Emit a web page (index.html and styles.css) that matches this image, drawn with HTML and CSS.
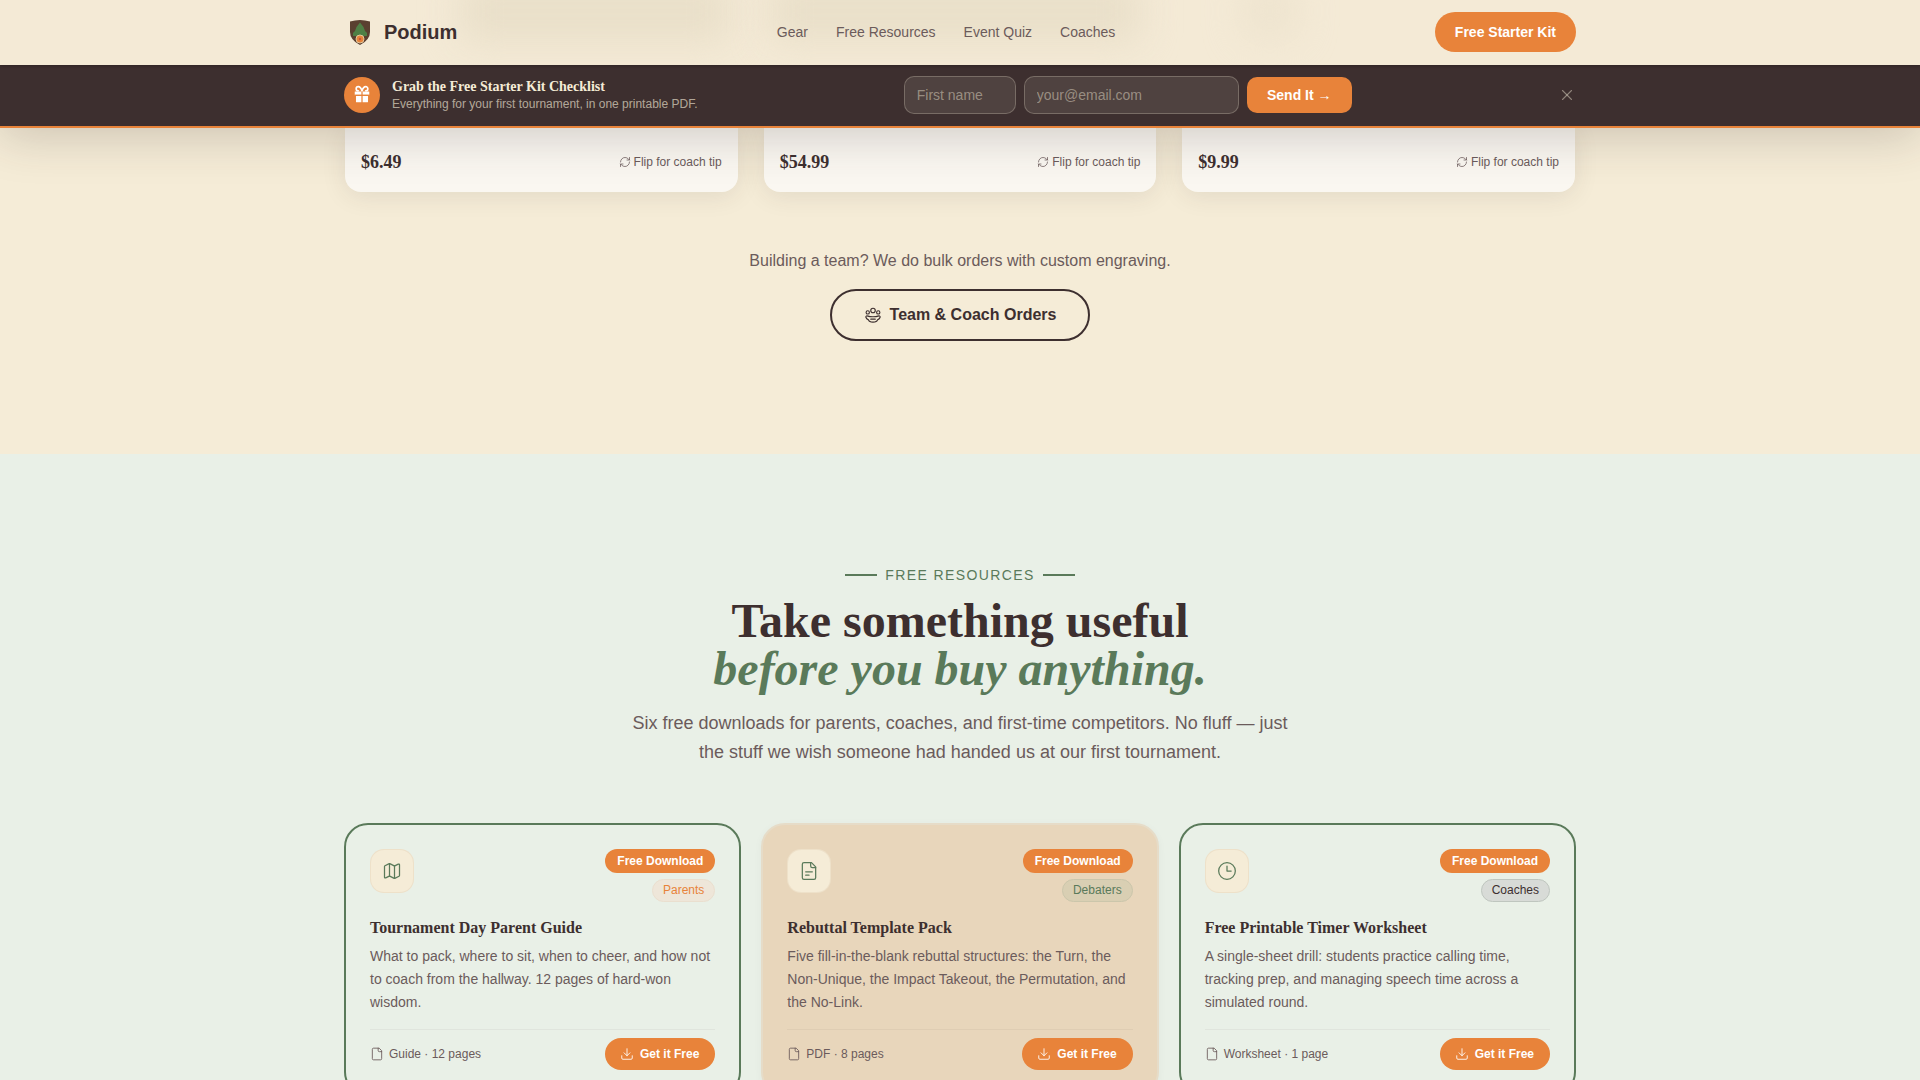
FILE: index.html
```html
<!DOCTYPE html>
<html>
<head>
  <title>Podium</title>
  <link rel="stylesheet" href="styles.css">
</head>
<body>
  <div id="nav">
    <!-- gear photos scrolling behind the frosted nav -->
    <span class="nav-blur nav-blur-a"></span>
    <span class="nav-blur nav-blur-b"></span>
    <span class="nav-blur nav-blur-c"></span>
    <div class="nav-inner">
      <a class="brand">
        <svg class="brand-logo" viewBox="0 0 24 28">
          <path d="M2 3.500 Q12 .5 22 3.500 V14 Q22 22 12 27 Q2 22 2 14 Z" fill="#5a4030"/>
          <path d="M12 4.500 L15.500 9 L17 13 L19 15 L19 18 H5 L5 15 L7 13 L8.500 9 Z" fill="#4f7f45"/>
          <circle cx="12" cy="21" r="4" fill="#e8833a" stroke="#e3c79c" stroke-width="1"/>
          <circle cx="12" cy="21" r="1.200" fill="#c8553a"/>
        </svg>
        <span class="brand-name">Podium</span>
      </a>
      <div class="nav-links">
        <a>Gear</a>
        <a>Free Resources</a>
        <a>Event Quiz</a>
        <a>Coaches</a>
      </div>
      <a class="nav-cta">Free Starter Kit</a>
    </div>
  </div>

  <div id="banner">
    <div class="banner-inner">
      <div class="banner-left">
        <div class="banner-icon">
          <svg viewBox="0 0 24 24" fill="#fff" stroke="#e8833a" stroke-width="1.500" stroke-linecap="round" stroke-linejoin="round">
            <rect x="2.500" y="7" width="19" height="5.500" rx="1"/>
            <path d="M4 12.500h16v7.500a1.500 1.500 0 0 1-1.500 1.500h-13A1.500 1.500 0 0 1 4 20z"/>
            <path d="M12 7v14.500"/>
            <path d="M7.500 7a2.500 2.500 0 0 1 0-5C10.500 2 12 7 12 7s1.500-5 4.500-5a2.500 2.500 0 0 1 0 5" fill="none" stroke="#fff" stroke-width="2"/>
          </svg>
        </div>
        <div>
          <div class="banner-title">Grab the Free Starter Kit Checklist</div>
          <div class="banner-sub">Everything for your first tournament, in one printable PDF.</div>
        </div>
      </div>
      <form class="banner-form">
        <input type="text" class="input-name" placeholder="First name">
        <input type="text" class="input-email" placeholder="your@email.com">
        <button type="button" class="send-btn">Send It →</button>
      </form>
      <button type="button" class="banner-close">
        <svg viewBox="0 0 24 24" fill="none" stroke="currentColor" stroke-width="1.500" stroke-linecap="round"><path d="M18 6 6 18"/><path d="m6 6 12 12"/></svg>
      </button>
    </div>
  </div>

  <div id="gear">
    <div class="container">
      <div class="gear-grid">
        <div class="gear-card">
          <span class="price">$6.49</span>
          <span class="flip"><svg class="icon-flip" viewBox="0 0 24 24"><path d="M3 12a9 9 0 0 1 9-9 9.750 9.750 0 0 1 6.740 2.740L21 8"/><path d="M21 3v5h-5"/><path d="M21 12a9 9 0 0 1-9 9 9.750 9.750 0 0 1-6.740-2.740L3 16"/><path d="M8 16H3v5"/></svg>Flip for coach tip</span>
        </div>
        <div class="gear-card">
          <span class="price">$54.99</span>
          <span class="flip"><svg class="icon-flip" viewBox="0 0 24 24"><path d="M3 12a9 9 0 0 1 9-9 9.750 9.750 0 0 1 6.740 2.740L21 8"/><path d="M21 3v5h-5"/><path d="M21 12a9 9 0 0 1-9 9 9.750 9.750 0 0 1-6.740-2.740L3 16"/><path d="M8 16H3v5"/></svg>Flip for coach tip</span>
        </div>
        <div class="gear-card">
          <span class="price">$9.99</span>
          <span class="flip"><svg class="icon-flip" viewBox="0 0 24 24"><path d="M3 12a9 9 0 0 1 9-9 9.750 9.750 0 0 1 6.740 2.740L21 8"/><path d="M21 3v5h-5"/><path d="M21 12a9 9 0 0 1-9 9 9.750 9.750 0 0 1-6.740-2.740L3 16"/><path d="M8 16H3v5"/></svg>Flip for coach tip</span>
        </div>
      </div>
      <div class="team">
        <p class="team-text">Building a team? We do bulk orders with custom engraving.</p>
        <a class="team-btn">
          <svg viewBox="0 0 24 24" fill="none" stroke="currentColor" stroke-width="1.500" stroke-linecap="round" stroke-linejoin="round">
            <circle cx="12" cy="6" r="3"/>
            <circle cx="5" cy="8.500" r="2.200"/>
            <circle cx="19" cy="8.500" r="2.200"/>
            <path d="M5.500 13.500c2 1 11 1 13 0 1.500-.7 3.500-.5 3 1.500-.5 2-2 3-3.500 3.500-.5 2-3 3-6 3s-5.500-1-6-3C4.500 18 3 17 2.500 15c-.5-2 1.500-2.200 3-1.500z"/>
            <path d="M9 17.500h6"/>
          </svg>
          Team &amp; Coach Orders
        </a>
      </div>
    </div>
  </div>

  <div id="resources">
    <div class="container">
      <div class="section-head">
        <div class="eyebrow">Free Resources</div>
        <h2>Take something useful<br><em>before you buy anything.</em></h2>
        <p>Six free downloads for parents, coaches, and first-time competitors. No fluff — just the stuff we wish someone had handed us at our first tournament.</p>
      </div>

      <div class="res-grid">
        <div class="res-card">
          <div class="res-top">
            <div class="res-icon">
              <svg viewBox="0 0 24 24"><path d="M14.106 5.553a2 2 0 0 0 1.788 0l3.659-1.830A1 1 0 0 1 21 4.619v12.764a1 1 0 0 1-.553.894l-4.553 2.277a2 2 0 0 1-1.788 0l-4.212-2.106a2 2 0 0 0-1.788 0l-3.659 1.830A1 1 0 0 1 3 19.381V6.618a1 1 0 0 1 .553-.894l4.553-2.277a2 2 0 0 1 1.788 0z"/><path d="M15 5.764v15"/><path d="M9 3.236v15"/></svg>
            </div>
            <div class="res-badges">
              <span class="badge-free">Free Download</span>
              <span class="tag tag-parents">Parents</span>
            </div>
          </div>
          <h3>Tournament Day Parent Guide</h3>
          <p class="res-desc">What to pack, where to sit, when to cheer, and how not to coach from the hallway. 12 pages of hard-won wisdom.</p>
          <div class="res-foot">
            <span class="res-meta"><svg viewBox="0 0 24 24"><path d="M15 2H6a2 2 0 0 0-2 2v16a2 2 0 0 0 2 2h12a2 2 0 0 0 2-2V7Z"/><path d="M14 2v4a2 2 0 0 0 2 2h4"/></svg>Guide · 12 pages</span>
            <a class="get-btn"><svg viewBox="0 0 24 24"><path d="M12 15V3"/><path d="M21 15v4a2 2 0 0 1-2 2H5a2 2 0 0 1-2-2v-4"/><path d="m7 10 5 5 5-5"/></svg>Get it Free</a>
          </div>
        </div>

        <div class="res-card res-card-sand">
          <div class="res-top">
            <div class="res-icon">
              <svg viewBox="0 0 24 24"><path d="M15 2H6a2 2 0 0 0-2 2v16a2 2 0 0 0 2 2h12a2 2 0 0 0 2-2V7Z"/><path d="M14 2v4a2 2 0 0 0 2 2h4"/><path d="M16 13H8"/><path d="M12 17H8"/></svg>
            </div>
            <div class="res-badges">
              <span class="badge-free">Free Download</span>
              <span class="tag tag-debaters">Debaters</span>
            </div>
          </div>
          <h3>Rebuttal Template Pack</h3>
          <p class="res-desc">Five fill-in-the-blank rebuttal structures: the Turn, the Non-Unique, the Impact Takeout, the Permutation, and the No-Link.</p>
          <div class="res-foot">
            <span class="res-meta"><svg viewBox="0 0 24 24"><path d="M15 2H6a2 2 0 0 0-2 2v16a2 2 0 0 0 2 2h12a2 2 0 0 0 2-2V7Z"/><path d="M14 2v4a2 2 0 0 0 2 2h4"/></svg>PDF · 8 pages</span>
            <a class="get-btn"><svg viewBox="0 0 24 24"><path d="M12 15V3"/><path d="M21 15v4a2 2 0 0 1-2 2H5a2 2 0 0 1-2-2v-4"/><path d="m7 10 5 5 5-5"/></svg>Get it Free</a>
          </div>
        </div>

        <div class="res-card">
          <div class="res-top">
            <div class="res-icon">
              <svg viewBox="0 0 24 24"><circle cx="12" cy="12" r="10"/><path d="M12 6v6h5"/></svg>
            </div>
            <div class="res-badges">
              <span class="badge-free">Free Download</span>
              <span class="tag tag-coaches">Coaches</span>
            </div>
          </div>
          <h3>Free Printable Timer Worksheet</h3>
          <p class="res-desc">A single-sheet drill: students practice calling time, tracking prep, and managing speech time across a simulated round.</p>
          <div class="res-foot">
            <span class="res-meta"><svg viewBox="0 0 24 24"><path d="M15 2H6a2 2 0 0 0-2 2v16a2 2 0 0 0 2 2h12a2 2 0 0 0 2-2V7Z"/><path d="M14 2v4a2 2 0 0 0 2 2h4"/></svg>Worksheet · 1 page</span>
            <a class="get-btn"><svg viewBox="0 0 24 24"><path d="M12 15V3"/><path d="M21 15v4a2 2 0 0 1-2 2H5a2 2 0 0 1-2-2v-4"/><path d="m7 10 5 5 5-5"/></svg>Get it Free</a>
          </div>
        </div>
      </div>
    </div>
  </div>
</body>
</html>
```

FILE: styles.css
```css
:root {
  --cream: #f5ecd7;
  --sand: #e8d6bb;
  --mint: #e9f0e7;
  --dark: #3d2f2f;
  --muted: #6b5b5b;
  --green: #5a7a5a;
  --orange: #e8833a;
  --sans: "Liberation Sans", Arial, sans-serif;
  --serif: "Liberation Serif", "Times New Roman", serif;
}

* { box-sizing: border-box; }

html, body {
  height: 100%;
  overflow: hidden;
}

body {
  margin: 0;
  font-family: var(--sans);
  color: var(--dark);
  background-color: var(--cream);
}

.container {
  width: 1280px;
  margin: 0 auto;
  padding: 0 24px;
}

/* Nav */
#nav {
  position: relative;
  z-index: 3;
  height: 65px;
  padding-bottom: 1px;
  overflow: hidden;
  background-color: #f4ead6;
  box-shadow: 0 1px 3px rgba(0, 0, 0, 0.25);
}

.nav-blur {
  position: absolute;
  top: -20px;
  height: 62px;
  border-radius: 10px;
  background-color: #e9dfc9;
  filter: blur(18px);
}
.nav-blur-a { left: 460px; width: 270px; }
.nav-blur-b { left: 770px; width: 370px; }
.nav-blur-c { left: 1240px; width: 60px; opacity: 0.5; }

.nav-inner {
  position: relative;
  width: 1280px;
  height: 100%;
  margin: 0 auto;
  padding: 0 24px;
  display: flex;
  align-items: center;
  justify-content: space-between;
}

.brand {
  display: flex;
  align-items: center;
  gap: 12px;
  margin-left: 4px;
}

.brand-logo {
  width: 24px;
  height: 28px;
}

.brand-name {
  font-size: 20px;
  font-weight: bold;
}

.nav-links {
  display: flex;
  gap: 28px;
  font-size: 14px;
  color: var(--muted);
}

.nav-cta {
  padding: 0 20px;
  height: 40px;
  line-height: 40px;
  border-radius: 20px;
  background-color: var(--orange);
  color: #fff;
  font-size: 14px;
  font-weight: bold;
}

/* Banner */
#banner {
  position: relative;
  z-index: 2;
  height: 63px;
  background-color: var(--dark);
  border-bottom: 2px solid var(--orange);
  box-shadow: 0 8px 48px rgba(61, 47, 47, 0.22);
}

.banner-inner {
  width: 1280px;
  height: 100%;
  margin: 0 auto;
  padding: 0 24px 1px;
  display: flex;
  align-items: center;
  justify-content: space-between;
}

.banner-left {
  display: flex;
  align-items: center;
  gap: 12px;
}

.banner-icon {
  width: 36px;
  height: 36px;
  border-radius: 50%;
  background-color: var(--orange);
  display: flex;
  align-items: center;
  justify-content: center;
}
.banner-icon svg { width: 20px; height: 20px; }

.banner-title {
  font-family: var(--serif);
  font-size: 14px;
  font-weight: bold;
  line-height: 18px;
  color: #f5ecd7;
}

.banner-sub {
  font-size: 12px;
  line-height: 16px;
  color: rgba(245, 236, 215, 0.65);
}

.banner-form {
  display: flex;
  align-items: center;
  gap: 8px;
}

.banner-form input {
  height: 38px;
  padding: 0 12px;
  border: 1px solid rgba(245, 236, 215, 0.25);
  border-radius: 10px;
  background-color: rgba(245, 236, 215, 0.1);
  font-family: var(--sans);
  font-size: 14px;
  color: #f5ecd7;
}
.banner-form input::placeholder { color: rgba(245, 236, 215, 0.45); }

.input-name { width: 112px; }
.input-email { width: 215px; }

.send-btn {
  height: 36px;
  width: 105px;
  border: 0;
  border-radius: 10px;
  background-color: var(--orange);
  color: #fff;
  font-family: var(--sans);
  font-size: 14px;
  font-weight: bold;
}

.banner-close {
  width: 18px;
  height: 18px;
  padding: 0;
  border: 0;
  background: none;
  color: rgba(245, 236, 215, 0.45);
}
.banner-close svg { width: 18px; height: 18px; display: block; }

/* Gear section tail */
#gear {
  height: 326px;
}

.gear-grid {
  display: grid;
  grid-template-columns: repeat(3, 1fr);
  gap: 26px;
  padding: 0 1px;
}

.gear-card {
  height: 64px;
  padding: 4px 16px 0;
  display: flex;
  align-items: center;
  justify-content: space-between;
  border-radius: 0 0 16px 16px;
  background-color: #faf7f1;
  box-shadow: 0 4px 24px rgba(61, 47, 47, 0.1);
}

.price {
  font-family: var(--serif);
  font-size: 18px;
  font-weight: bold;
}

.flip {
  display: flex;
  align-items: center;
  gap: 3px;
  font-size: 12px;
  color: var(--muted);
}

.icon-flip {
  width: 12px;
  height: 12px;
  fill: none;
  stroke: currentColor;
  stroke-width: 1.500;
  stroke-linecap: round;
  stroke-linejoin: round;
}

.team {
  margin-top: 59px;
  text-align: center;
}

.team-text {
  margin: 0 0 18px;
  font-size: 16px;
  line-height: 20px;
  color: var(--muted);
}

.team-btn {
  display: inline-flex;
  align-items: center;
  gap: 8px;
  height: 52px;
  padding: 0 32px;
  border: 2px solid var(--dark);
  border-radius: 26px;
  font-size: 16px;
  font-weight: bold;
}
.team-btn svg { width: 18px; height: 18px; }

/* Resources */
#resources {
  height: 700px;
  padding-top: 113px;
  background-color: var(--mint);
}

.section-head {
  text-align: center;
}

.eyebrow {
  display: flex;
  align-items: center;
  justify-content: center;
  gap: 8px;
  font-size: 14px;
  line-height: 16px;
  letter-spacing: 0.1em;
  text-transform: uppercase;
  color: var(--green);
}
.eyebrow::before, .eyebrow::after {
  content: "";
  width: 32px;
  height: 2px;
  background-color: var(--green);
}

.section-head h2 {
  margin: 14px 0 0;
  font-family: var(--serif);
  font-size: 48px;
  line-height: 48px;
  font-weight: bold;
}
.section-head h2 em {
  color: var(--green);
}

.section-head p {
  width: 680px;
  margin: 16px auto 0;
  font-size: 18px;
  line-height: 29px;
  color: var(--muted);
}

.res-grid {
  display: grid;
  grid-template-columns: repeat(3, 1fr);
  gap: 20px;
  margin-top: 56px;
}

.res-card {
  padding: 24px;
  border: 2px solid var(--green);
  border-radius: 24px;
}

.res-card-sand {
  background-color: var(--sand);
  border-color: #e6dcc8;
  box-shadow: 0 2px 8px rgba(61, 47, 47, 0.04);
}

.res-top {
  display: flex;
  justify-content: space-between;
  align-items: flex-start;
}

.res-icon {
  width: 44px;
  height: 44px;
  border-radius: 14px;
  background-color: var(--cream);
  border: 1px solid rgba(232, 214, 187, 0.5);
  display: flex;
  align-items: center;
  justify-content: center;
}
.res-icon svg {
  width: 20px;
  height: 20px;
  fill: none;
  stroke: var(--green);
  stroke-width: 1.500;
  stroke-linecap: round;
  stroke-linejoin: round;
}

.res-badges {
  display: flex;
  flex-direction: column;
  align-items: flex-end;
  gap: 6px;
}

.badge-free {
  height: 24px;
  line-height: 24px;
  padding: 0 12px;
  border-radius: 12px;
  background-color: var(--orange);
  color: #fff;
  font-size: 12px;
  font-weight: bold;
}

.tag {
  height: 23px;
  line-height: 21px;
  padding: 0 10px;
  border-radius: 12px;
  border: 1px solid;
  font-size: 12px;
}
.tag-parents { color: var(--orange); background-color: #eee6d9; border-color: #eadfcf; }
.tag-debaters { color: var(--green); background-color: #d9cfb3; border-color: #cbc6ab; }
.tag-coaches { color: var(--dark); background-color: #d8dbd7; border-color: #bfc6bf; }

.res-card h3 {
  margin: 14px 0 0;
  font-family: var(--serif);
  font-size: 16px;
  line-height: 24px;
  font-weight: bold;
}

.res-desc {
  margin: 5px 0 0;
  font-size: 14px;
  line-height: 23.100px;
  color: var(--muted);
}

.res-foot {
  display: flex;
  align-items: center;
  justify-content: space-between;
  margin-top: 15px;
  padding-top: 8px;
  border-top: 1px solid rgba(61, 47, 47, 0.05);
}

.res-meta {
  display: flex;
  align-items: center;
  gap: 5px;
  font-size: 12px;
  color: var(--muted);
}
.res-meta svg {
  width: 14px;
  height: 14px;
  fill: none;
  stroke: currentColor;
  stroke-width: 1.500;
  stroke-linecap: round;
  stroke-linejoin: round;
}

.get-btn {
  display: flex;
  align-items: center;
  gap: 6px;
  height: 32px;
  padding: 0 16px 0 15px;
  border-radius: 16px;
  background-color: var(--orange);
  color: #fff;
  font-size: 12px;
  font-weight: bold;
}
.get-btn svg {
  width: 14px;
  height: 14px;
  fill: none;
  stroke: currentColor;
  stroke-width: 1.500;
  stroke-linecap: round;
  stroke-linejoin: round;
}
```
